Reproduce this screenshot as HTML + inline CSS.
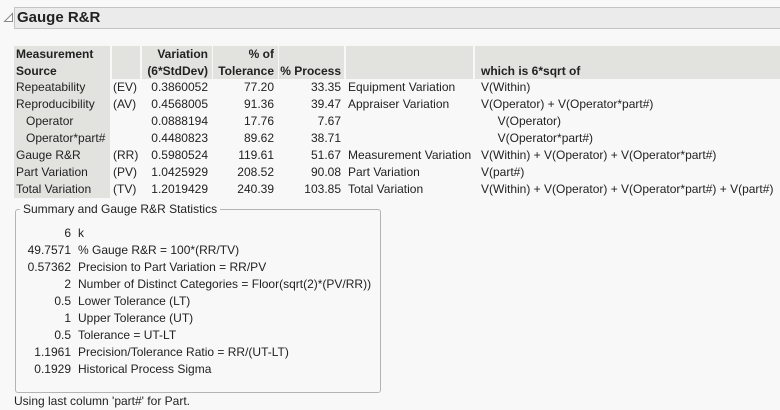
<!DOCTYPE html>
<html><head><style>
body{margin:0;width:780px;height:410px;background:#f8f8f8;font-family:"Liberation Sans",sans-serif;font-size:12px;color:#222;position:relative;overflow:hidden}
.a{position:absolute;white-space:nowrap;line-height:17px}
.r{text-align:right}
.hdr{position:absolute;background:#e2e2de;top:46px;height:33px}
.b{font-weight:bold}
</style></head><body>
<svg class="a" style="left:3px;top:12px" width="11" height="11"><path d="M1.5 9.5 L9.5 1.5 L9.5 9.5 Z" fill="#fff" stroke="#888" stroke-width="1"/></svg>
<div class="a" style="left:14px;top:7px;width:765px;height:20px;background:#ebebeb;border:1px solid #c4c4c4"></div>
<div class="a b" style="left:17px;top:7px;font-size:15px;line-height:21px">Gauge R&amp;R</div>

<div class="hdr" style="left:14px;width:96px"></div>
<div class="hdr" style="left:112px;width:28px"></div>
<div class="hdr" style="left:142px;width:70px"></div>
<div class="hdr" style="left:213px;width:65px"></div>
<div class="hdr" style="left:279px;width:65px"></div>
<div class="hdr" style="left:346px;width:127px"></div>
<div class="hdr" style="left:475px;width:305px"></div>
<div class="a" style="left:14px;top:79px;width:96px;height:119px;background:#e2e2de"></div>

<div class="a b" style="left:16px;top:46px">Measurement<br>Source</div>
<div class="a b r" style="left:140px;width:68px;top:46px">Variation<br>(6*StdDev)</div>
<div class="a b r" style="left:210px;width:64px;top:46px">% of<br>Tolerance</div>
<div class="a b r" style="left:276px;width:65px;top:63px">% Process</div>
<div class="a b" style="left:481px;top:63px">which is 6*sqrt of</div>

<div class="a" style="left:16px;top:79px">Repeatability<br>Reproducibility<br>&nbsp;&nbsp;&nbsp;Operator<br>&nbsp;&nbsp;&nbsp;Operator*part#<br>Gauge R&amp;R<br>Part Variation<br>Total Variation</div>
<div class="a" style="left:113px;top:79px">(EV)<br>(AV)<br><br><br>(RR)<br>(PV)<br>(TV)</div>
<div class="a r" style="left:140px;width:68px;top:79px">0.3860052<br>0.4568005<br>0.0888194<br>0.4480823<br>0.5980524<br>1.0425929<br>1.2019429</div>
<div class="a r" style="left:210px;width:64px;top:79px">77.20<br>91.36<br>17.76<br>89.62<br>119.61<br>208.52<br>240.39</div>
<div class="a r" style="left:276px;width:65px;top:79px">33.35<br>39.47<br>7.67<br>38.71<br>51.67<br>90.08<br>103.85</div>
<div class="a" style="left:348px;top:79px">Equipment Variation<br>Appraiser Variation<br><br><br>Measurement Variation<br>Part Variation<br>Total Variation</div>
<div class="a" style="left:481px;top:79px">V(Within)<br>V(Operator) + V(Operator*part#)<br>&nbsp;&nbsp;&nbsp;&nbsp;&nbsp;V(Operator)<br>&nbsp;&nbsp;&nbsp;&nbsp;&nbsp;V(Operator*part#)<br>V(Within) + V(Operator) + V(Operator*part#)<br>V(part#)<br>V(Within) + V(Operator) + V(Operator*part#) + V(part#)</div>

<div class="a" style="left:15px;top:209px;width:364px;height:182px;border:1px solid #b4b4b4;border-radius:3px"></div>
<div class="a" style="left:20px;top:201px;background:#f8f8f8;padding:0 3px">Summary and Gauge R&amp;R Statistics</div>
<div class="a r" style="left:20px;width:51px;top:225px">6<br>49.7571<br>0.57362<br>2<br>0.5<br>1<br>0.5<br>1.1961<br>0.1929</div>
<div class="a" style="left:78px;top:225px">k<br>% Gauge R&amp;R = 100*(RR/TV)<br>Precision to Part Variation = RR/PV<br>Number of Distinct Categories = Floor(sqrt(2)*(PV/RR))<br>Lower Tolerance (LT)<br>Upper Tolerance (UT)<br>Tolerance = UT-LT<br>Precision/Tolerance Ratio = RR/(UT-LT)<br>Historical Process Sigma</div>
<div class="a" style="left:14px;top:393px">Using last column 'part#' for Part.</div>
</body></html>
